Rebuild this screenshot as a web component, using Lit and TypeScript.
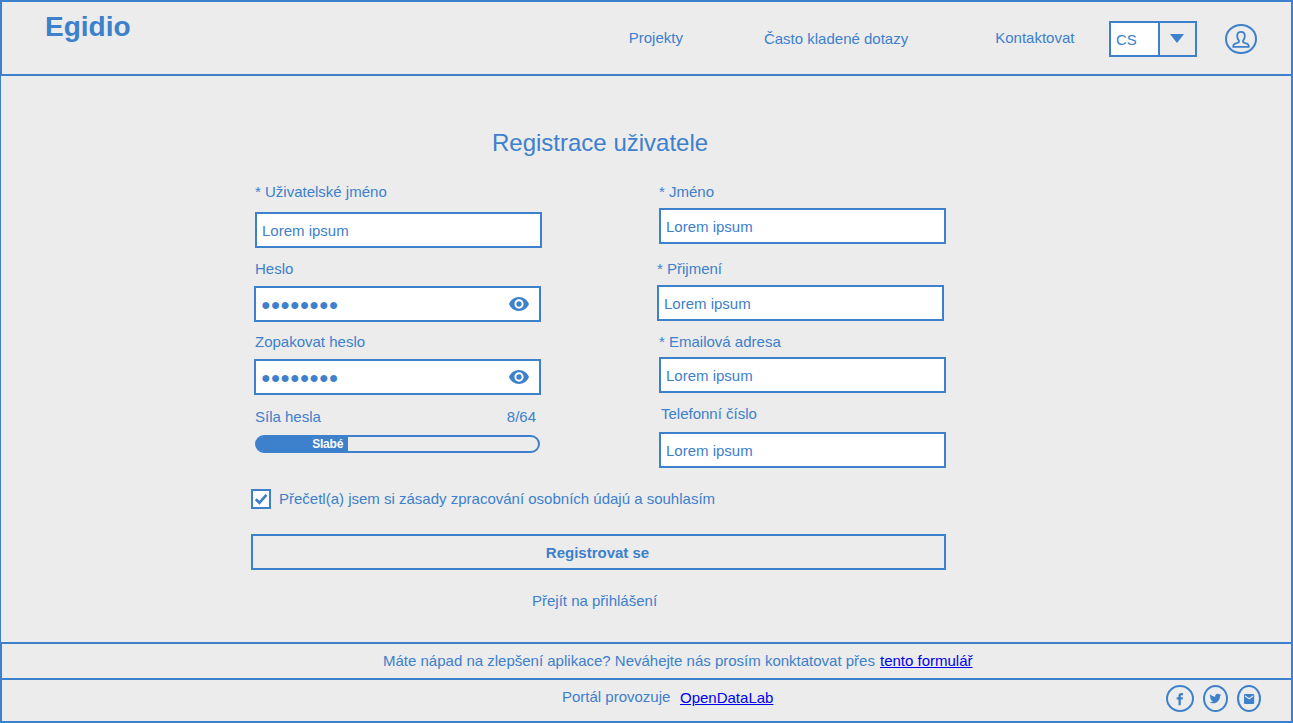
import { LitElement, html, css, svg, nothing } from "lit";
import { customElement, property } from "lit/decorators.js";

@customElement("text-field")
class TextField extends LitElement {
  @property() label = "";
  @property() value = "";
  @property({ type: Boolean }) secret = false;

  static styles = css`
    :host { display: block; width: 287px; }
    .label { display: block; height: 17px; padding-left: var(--label-indent, 0px); margin-bottom: var(--label-gap, 8px); white-space: nowrap; }
    .box { box-sizing: border-box; height: 36px; display: flex; align-items: flex-start; justify-content: space-between; padding: 8px 10px 0 5px; background: #fff; border: 2px solid #3d80cc; }
    .dots { font-size: 16px; line-height: 18px; }
    .eye { display: block; width: 20px; height: 14px; margin-top: 1px; }
  `;

  render() {
    return html`
      <span class="label">${this.label}</span>
      <div class="box">
        <span class=${this.secret ? "dots" : "value"}>${this.value}</span>
        ${this.secret
          ? html`<svg class="eye" viewBox="1 4.5 22 15" preserveAspectRatio="none">
              <path fill="#3d80cc" d="M12 4.5C7 4.5 2.73 7.61 1 12c1.73 4.39 6 7.5 11 7.5s9.27-3.11 11-7.5c-1.73-4.39-6-7.5-11-7.5zM12 17c-2.76 0-5-2.24-5-5s2.24-5 5-5 5 2.24 5 5-2.24 5-5 5zm0-8c-1.66 0-3 1.34-3 3s1.34 3 3 3 3-1.34 3-3-1.34-3-3-3z"/>
            </svg>`
          : nothing}
      </div>
    `;
  }
}

const facebook = svg`<path d="M12.5 20.3v-5.8H10.7v-2.3h1.8v-1.4c0-1.9 1-2.8 2.7-2.8h1.8v2.2h-1.1c-.8 0-1.1.4-1.1 1.1v.9h2.2l-.3 2.3h-1.9v5.8z"/>`;
const twitter = svg`<g transform="translate(5.6 7.1) scale(.56)"><path d="M22.46 3c-.77.35-1.6.58-2.46.69.88-.53 1.56-1.37 1.88-2.38-.83.5-1.75.85-2.72 1.05C18.37 1.5 17.26 1 16 1c-2.35 0-4.27 1.92-4.27 4.29 0 .34.04.67.11.98C8.28 6.09 5.11 4.38 3 1.79c-.37.63-.58 1.37-.58 2.15 0 1.49.75 2.81 1.91 3.56-.71 0-1.37-.2-1.95-.5v.03c0 2.08 1.48 3.82 3.44 4.21a4.22 4.22 0 0 1-1.93.07 4.28 4.28 0 0 0 4 2.98 8.521 8.521 0 0 1-5.33 1.84c-.34 0-.68-.02-1.02-.06C3.44 17.29 5.7 18 8.12 18 16 18 20.33 11.46 20.33 5.79c0-.19 0-.37-.01-.56.84-.6 1.56-1.36 2.14-2.23z" transform="translate(0 2)"/></g>`;
const mail = svg`<path d="M8 9h8.2a1 1 0 0 1 1 1v8a1 1 0 0 1-1 1H8a1 1 0 0 1-1-1v-8a1 1 0 0 1 1-1zM7.9 10.3v1.2l4.2 2.9 4.2-2.9v-1.2l-4.2 2.8z" fill-rule="evenodd"/>`;

@customElement("app-root")
class AppRoot extends LitElement {
  static styles = css`
    :host { display: flex; flex-direction: column; box-sizing: border-box; width: 1293px; height: 723px; background: #ececec; color: #3d80cc; font: 15px/17px "Liberation Sans", Arial, sans-serif; overflow: hidden; }
    * { box-sizing: border-box; }
    svg { display: block; flex: none; }
    span, a { white-space: nowrap; }

    header { display: flex; align-items: flex-start; height: 76px; border: 2px solid #3d80cc; padding-right: 34px; }
    .brand { margin: 9px 0 0 43px; font-size: 28px; line-height: 32px; font-weight: bold; }
    nav { display: flex; align-items: flex-start; margin-left: auto; padding-top: 27px; }
    .faq { margin: 1px 87px 0 81px; }
    .lang { display: flex; width: 88px; height: 36px; margin: 19px 28px 0 34.6px; border: 2px solid #3d80cc; }
    .code { width: 49px; padding: 8px 0 0 5px; background: #fff; border-right: 2px solid #3d80cc; box-sizing: border-box; }
    .caret { margin: 11px 0 0 10px; }
    .user { margin-top: 22px; }

    main { flex: none; height: 566px; border-left: 1px solid #3d80cc; border-right: 2px solid #3d80cc; padding-left: 250px; }
    h1 { margin: 0; padding: 53px 0 0 241px; font-size: 24px; line-height: 28px; font-weight: normal; }
    .form { display: flex; height: 285px; margin-top: 26px; }
    .left { width: 408px; padding-left: 3px; }
    .username { --label-gap: 12px; margin-left: 1px; }
    .password { --label-gap: 9px; --label-indent: 1px; margin-top: 12px; }
    .repeat { --label-gap: 9px; --label-indent: 1px; margin-top: 11px; }
    .strength { display: flex; justify-content: space-between; width: 281px; margin: 13px 0 10px 1px; }
    .bar { width: 285px; height: 18px; margin-left: 1px; border: 2px solid #3d80cc; border-radius: 9px; }
    .fill { height: 14px; margin-left: -1px; padding-right: 5px; background: #3d80cc; border-radius: 7px 0 0 7px; color: #fff; font-size: 12px; line-height: 14px; font-weight: bold; letter-spacing: -0.2px; text-align: right; }
    .surname { margin: 16px 0 0 -2px; }
    .email { --label-gap: 7px; margin-top: 12px; }
    .phone { --label-gap: 10px; --label-indent: 2px; margin-top: 12px; }
    .consent { display: flex; align-items: flex-start; height: 20px; margin-top: 21px; gap: 8px; }
    .consent span { padding-top: 1px; }
    .check { width: 20px; height: 20px; border: 2px solid #3d80cc; background: #fff; }
    button { display: block; width: 695px; height: 36px; margin: 25px 0 22px; padding: 0 2px 0 0; border: 2px solid #3d80cc; background: none; color: inherit; font: bold 15px/17px "Liberation Sans", Arial, sans-serif; }
    .login { display: block; padding-left: 281px; }

    footer { height: 81px; border: 2px solid #3d80cc; }
    .feedback { display: flex; height: 36px; padding: 8px 0 0 381px; gap: 5px; border-bottom: 2px solid #3d80cc; }
    .operator { display: flex; align-items: flex-start; height: 41px; padding: 5px 30px 0 560px; }
    .operator > span { margin: 3px 9.6px 0 0; }
    .operator > a { margin-top: 4px; }
    footer a { color: #00e; }
    .social { display: flex; gap: 9px; margin-left: auto; }
  `;

  strength = { length: 8, max: 64, percent: 32.8, label: "Slabé" };

  socials = [
    { w: 28, glyph: facebook },
    { w: 25, glyph: twitter },
    { w: 24, glyph: mail },
  ];

  render() {
    const s = this.strength;
    return html`
      <header>
        <span class="brand">Egidio</span>
        <nav>
          <span>Projekty</span>
          <span class="faq">Často kladené dotazy</span>
          <span>Kontaktovat</span>
        </nav>
        <div class="lang">
          <span class="code">CS</span>
          <svg class="caret" width="14" height="9" viewBox="0 0 14 9"><path fill="#3d80cc" d="M0 0h14L7 9z"/></svg>
        </div>
        <svg class="user" width="32" height="30" viewBox="0 0 32 30" fill="none" stroke="#3d80cc">
          <ellipse cx="16" cy="15" rx="15" ry="14" stroke-width="2"/>
          <path stroke-width="1.8" stroke-linejoin="round" d="M16 7.8c-2.4 0-3.8 1.7-3.8 4.2 0 1.9.6 3.4 1.6 4.4.5 1.4.1 2.1-1.5 2.6l-2.2.7c-1.4.5-2 1.5-2 3.1h15.8c0-1.6-.6-2.6-2-3.1l-2.2-.7c-1.6-.5-2-1.2-1.5-2.6 1-1 1.6-2.5 1.6-4.4 0-2.5-1.4-4.2-3.8-4.2z"/>
        </svg>
      </header>
      <main>
        <h1>Registrace uživatele</h1>
        <div class="form">
          <div class="left">
            <text-field class="username" label="* Uživatelské jméno" value="Lorem ipsum"></text-field>
            <text-field class="password" label="Heslo" value="●●●●●●●●" secret></text-field>
            <text-field class="repeat" label="Zopakovat heslo" value="●●●●●●●●" secret></text-field>
            <div class="strength"><span>Síla hesla</span><span>${s.length}/${s.max}</span></div>
            <div class="bar"><div class="fill" style="width:${s.percent}%">${s.label}</div></div>
          </div>
          <div class="right">
            <text-field class="name" label="* Jméno" value="Lorem ipsum"></text-field>
            <text-field class="surname" label="* Přijmení" value="Lorem ipsum"></text-field>
            <text-field class="email" label="* Emailová adresa" value="Lorem ipsum"></text-field>
            <text-field class="phone" label="Telefonní číslo" value="Lorem ipsum"></text-field>
          </div>
        </div>
        <div class="consent">
          <div class="check">
            <svg width="16" height="16" viewBox="0 0 16 16"><path d="M2.8 8.2l3.6 3.6 7-8" fill="none" stroke="#3d80cc" stroke-width="2.8"/></svg>
          </div>
          <span>Přečetl(a) jsem si zásady zpracování osobních údajú a souhlasím</span>
        </div>
        <button>Registrovat se</button>
        <span class="login">Přejít na přihlášení</span>
      </main>
      <footer>
        <div class="feedback">
          <span>Máte nápad na zlepšení aplikace? Neváhejte nás prosím konktatovat přes</span>
          <a href="#">tento formulář</a>
        </div>
        <div class="operator">
          <span>Portál provozuje</span>
          <a href="#">OpenDataLab</a>
          <div class="social">
            ${this.socials.map(
              (i) => html`<svg width=${i.w} height="27" viewBox="0 0 ${i.w} 27" fill="#3d80cc">
                <ellipse cx=${i.w / 2} cy="13.5" rx=${i.w / 2 - 1} ry="12.5" fill="none" stroke="#3d80cc" stroke-width="2"/>
                ${i.glyph}
              </svg>`
            )}
          </div>
        </div>
      </footer>
    `;
  }
}
